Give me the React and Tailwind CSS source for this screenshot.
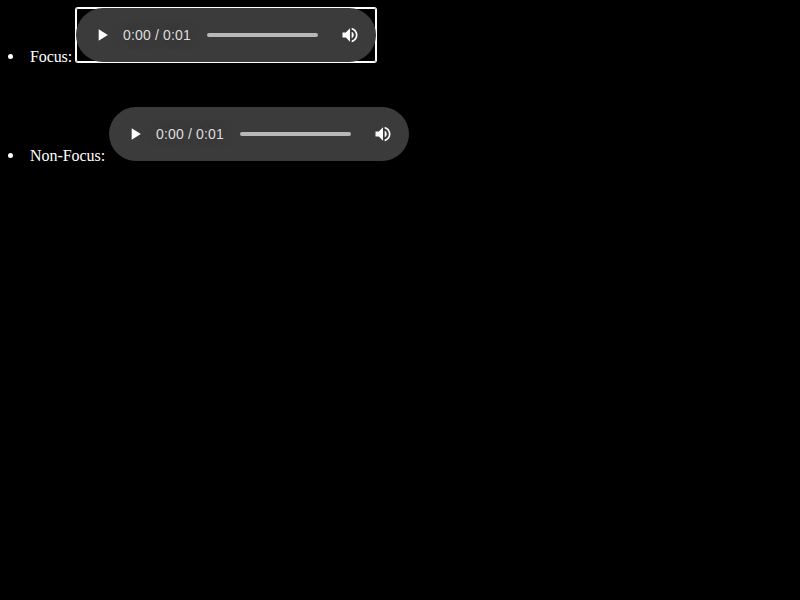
function Player({ focused }) {
  return (
    <div className={`flex h-[54px] w-[300px] shrink-0 ${focused ? 'rounded-[2px] shadow-[0_0_0_1px_white,inset_0_0_0_1px_white]' : ''}`}>
      <div className="flex h-full w-full items-center rounded-full bg-[#3b3b3b] pl-4">
        <svg className="h-5 w-5 shrink-0" viewBox="0 0 24 24" fill="white">
          <path d="M8 5v14l11-7z" />
        </svg>
        <div className="ml-[11px] w-[84px] shrink-0 whitespace-nowrap font-['Liberation_Sans',sans-serif] text-[14px] leading-[20px] tracking-[0.17px] text-[#dedede] [text-shadow:0_0_10px_#383838]">0:00 / 0:01</div>
        <div className="h-1 w-[111px] shrink-0 rounded-[2px] bg-[#b8b8b8]" />
        <svg className="ml-[22px] h-5 w-5 shrink-0" viewBox="0 0 24 24" fill="white">
          <path d="M3 9v6h4l5 5V4L7 9H3zm13.5 3c0-1.77-1.02-3.29-2.5-4.03v8.05c1.48-.73 2.5-2.25 2.5-4.02zM14 3.23v2.06c2.89.86 5 3.54 5 6.71s-2.11 5.85-5 6.71v2.06c4.01-.91 7-4.49 7-8.77s-2.99-7.86-7-8.77z" />
        </svg>
      </div>
    </div>
  );
}

function Row({ label, gap, focused }) {
  return (
    <li className="flex h-[58px] items-start">
      <span className="mt-[46px] h-[5px] w-[5px] shrink-0 rounded-full bg-white" />
      <span className={`ml-[17px] mt-[40px] whitespace-nowrap text-base leading-[18px] ${gap}`}>{label}</span>
      <Player focused={focused} />
    </li>
  );
}

export default function App() {
  return (
    <main className="h-[600px] w-[800px] overflow-hidden bg-black p-2 font-['Liberation_Serif',serif] text-white">
      <ul className="flex flex-col gap-[41px]">
        <Row label="Focus:" gap="w-[46px] tracking-[-0.11px]" focused />
        <Row label="Non-Focus:" gap="w-[79px] tracking-[-0.05px]" />
      </ul>
    </main>
  );
}
